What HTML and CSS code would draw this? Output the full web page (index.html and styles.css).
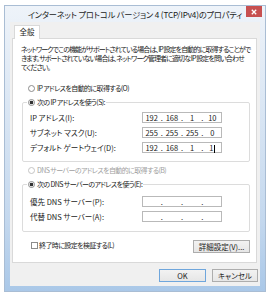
FILE: index.html
```html
<!DOCTYPE html>
<html lang="ja">
<head>
    <meta charset="utf-8">
    <link rel="stylesheet" href="styles.css">
</head>
<body>
    <div class="window">
        <div class="titlebar">
            <span></span>
            <span class="title">インターネット プロトコル バージョン 4 (TCP/IPv4)のプロパティ</span>
            <span class="close">
                <svg width="6" height="6" viewBox="0 0 6 6"><path d="M0.8 0.8L5.2 5.2M5.2 0.8L0.8 5.2" stroke="#fff" stroke-width="1.3"/></svg>
            </span>
        </div>

        <div class="client">
            <div class="tabs"><span class="tab">全般</span></div>

            <div class="panel">
                <p class="desc">ネットワークでこの機能がサポートされている場合は、IP 設定を自動的に取得することがで<br>きます。サポートされていない場合は、ネットワーク管理者に適切な IP 設定を問い合わせ<br>てください。</p>

                <div class="option"><span class="radio"></span>IP アドレスを自動的に取得する(O)</div>

                <fieldset class="group">
                    <legend><span class="radio on"></span>次の IP アドレスを使う(S):</legend>
                    <div class="row">
                        <label>IP アドレス(I):</label>
                        <div class="ipbox"><span>192</span><i>.</i><span>168</span><i>.</i><span>1</span><i>.</i><span>10</span></div>
                    </div>
                    <div class="row">
                        <label>サブネット マスク(U):</label>
                        <div class="ipbox"><span>255</span><i>.</i><span>255</span><i>.</i><span>255</span><i>.</i><span>0</span></div>
                    </div>
                    <div class="row">
                        <label>デフォルト ゲートウェイ(D):</label>
                        <div class="ipbox"><span>192</span><i>.</i><span>168</span><i>.</i><span>1</span><i>.</i><span>1<b class="caret"></b></span></div>
                    </div>
                </fieldset>

                <div class="option disabled"><span class="radio"></span>DNS サーバーのアドレスを自動的に取得する(B)</div>

                <fieldset class="group dns">
                    <legend><span class="radio on"></span>次の DNS サーバーのアドレスを使う(E):</legend>
                    <div class="row">
                        <label>優先 DNS サーバー(P):</label>
                        <div class="ipbox"><span></span><i>.</i><span></span><i>.</i><span></span><i>.</i><span></span></div>
                    </div>
                    <div class="row">
                        <label>代替 DNS サーバー(A):</label>
                        <div class="ipbox"><span></span><i>.</i><span></span><i>.</i><span></span><i>.</i><span></span></div>
                    </div>
                </fieldset>

                <div class="bottom">
                    <div class="check"><span class="box"></span>終了時に設定を検証する(L)</div>
                    <button class="btn wide">詳細設定(V)...</button>
                </div>
            </div>

            <div class="footer">
                <button class="btn default">OK</button>
                <button class="btn">キャンセル</button>
            </div>
        </div>
    </div>
</body>
</html>
```

FILE: styles.css
```css
* {
    box-sizing: border-box;
}

body {
    margin: 0;
    background: #fff;
    font-family: "Noto Sans CJK JP", sans-serif;
    font-feature-settings: "palt";
    font-size: 7.5px;
    color: #1a1a1a;
}

.window {
    margin: 5px 0 0 4px;
    width: 262px;
    height: 287px;
    background: linear-gradient(#eef3f9, #c4d8ee 75%, #aac8e8);
    border: 1px solid #a9bdd4;
    padding: 0 5px 5px;
    display: flex;
    flex-direction: column;
}

.titlebar {
    height: 16px;
    display: grid;
    grid-template-columns: 1fr auto 1fr;
    align-items: center;
}

.title {
    font-size: 8.2px;
    letter-spacing: -0.15px;
    color: #222;
    white-space: nowrap;
}

.close {
    justify-self: end;
    align-self: start;
    width: 16px;
    height: 11px;
    margin-right: -2px;
    background: #c75050;
    display: flex;
    align-items: center;
    justify-content: center;
}

.close svg {
    display: block;
}

.client {
    flex: 1;
    background: #f0f0f0;
    padding: 3px 2px 4px 2px;
    display: flex;
    flex-direction: column;
}

.tabs {
    display: flex;
    padding-left: 2px;
    margin-bottom: -1px;
    position: relative;
}

.tab {
    height: 14px;
    width: 26px;
    background: #fff;
    border: 1px solid #d9d9d9;
    border-bottom: none;
    text-align: center;
    line-height: 12px;
}

.panel {
    flex: 1;
    margin-right: 1px;
    background: #fff;
    border: 1px solid #d9d9d9;
    padding: 6px 6px 0 8px;
}

.desc {
    margin: 0;
    font-size: 7px;
    letter-spacing: -0.9px;
    line-height: 9px;
    white-space: nowrap;
}

.option,
.group legend,
.check {
    font-size: 7px;
    letter-spacing: -0.6px;
    white-space: nowrap;
}

.option {
    margin-top: 11px;
    padding-left: 7px;
    height: 10px;
    line-height: 10px;
    display: flex;
    align-items: center;
}

.option.disabled {
    margin-top: 3px;
    color: #a0a0a0;
}

.radio {
    width: 7px;
    height: 7px;
    margin-right: 2px;
    border: 1px solid #8c8c8c;
    border-radius: 50%;
    background: #fff;
    flex-shrink: 0;
}

.radio.on {
    background: radial-gradient(circle, #333 0 1.6px, #fff 2.1px);
}

.disabled .radio {
    border-color: #c4c4c4;
}

.group {
    margin: 4px 0 0 1px;
    padding: 5px 0 8px 7px;
    border: 1px solid #dcdcdc;
    border-radius: 2px;
}

.group.dns {
    padding-top: 7px;
    padding-bottom: 9px;
}

.group legend {
    margin-left: -3px;
    padding: 0 1px;
    height: 10px;
    line-height: 10px;
    display: flex;
    align-items: center;
}

.row {
    display: flex;
    align-items: center;
    height: 11px;
}

.row + .row {
    margin-top: 4px;
}

.row label {
    width: 112px;
    white-space: nowrap;
}

.ipbox {
    width: 80px;
    height: 11px;
    border: 1px solid #b9b9b9;
    background: #fff;
    display: grid;
    grid-template-columns: 1fr 3px 1fr 3px 1fr 3px 1fr;
    align-items: center;
    line-height: 9px;
}

.ipbox span {
    text-align: center;
}

.ipbox i {
    font-style: normal;
    text-align: center;
}

.caret {
    display: inline-block;
    width: 1px;
    height: 8px;
    margin-left: 1px;
    background: #000;
    vertical-align: middle;
}

.bottom {
    margin-top: 8px;
    display: flex;
    justify-content: space-between;
    align-items: center;
}

.check {
    padding-left: 10px;
    display: flex;
    align-items: center;
    margin-top: -3px;
}

.box {
    width: 7px;
    height: 7px;
    margin-right: 1px;
    border: 1px solid #8c8c8c;
    background: #fff;
}

.btn {
    height: 13px;
    padding: 0;
    font-family: inherit;
    font-feature-settings: "palt";
    font-size: 7.5px;
    color: #1a1a1a;
    background: linear-gradient(#f2f2f2, #e6e6e6);
    border: 1px solid #adadad;
    line-height: 11px;
}

.btn.wide {
    width: 57px;
}

.footer {
    margin-top: 6px;
    display: flex;
    justify-content: flex-end;
    gap: 6px;
}

.footer .btn {
    width: 46px;
}

.btn.default {
    width: 47px;
    border-color: #6fa6dc;
}
```
